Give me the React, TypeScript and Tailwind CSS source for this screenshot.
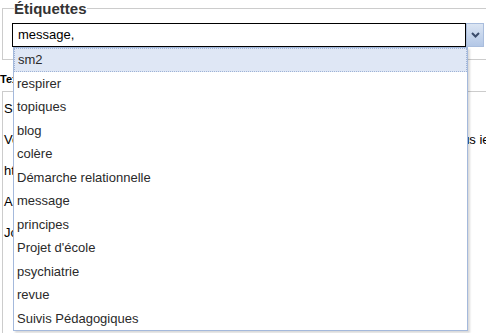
import React from "react";

const tags = [
  "sm2",
  "respirer",
  "topiques",
  "blog",
  "colère",
  "Démarche relationnelle",
  "message",
  "principes",
  "Projet d'école",
  "psychiatrie",
  "revue",
  "Suivis Pédagogiques",
];

const rows = ["Sujet", "Vous pourrez saisir plusieurs étiquettes, séparées par des virgules, pour que vous ie", "http://", "Auteur", "Journal"];

export default function App() {
  return (
    <div className="relative h-[333px] w-[486px] overflow-hidden bg-white font-['Liberation_Sans',Arial,sans-serif] text-[13px] text-[#222]">
      {/* Tags fieldset */}
      <fieldset className="ml-[2px] w-[560px] border border-[#cccccc] pb-[12px] pl-[9px]">
        <legend className="ml-[2px] text-[15px] font-bold leading-[17px] text-[#333]">Étiquettes</legend>
        <div className="mt-[6px] flex">
          <div className="flex h-[24px] w-[454px] items-center border border-black bg-white pl-[5px] text-black">
            message,
          </div>
          <button className="flex h-[24px] w-[18px] items-center justify-center border border-[#a9bddd] bg-gradient-to-b from-[#dbe5f3] to-[#b3c7e6]">
            <svg width="9" height="6" viewBox="0 0 9 6">
              <path d="M1 1 L4.5 4.5 L8 1" fill="none" stroke="#3b4c6b" strokeWidth="2" />
            </svg>
          </button>
        </div>
      </fieldset>

      {/* Content behind the dropdown */}
      <div className="mt-[12px] text-[11px] font-bold leading-[14px] text-black">Texte</div>
      <div className="mt-[5px] ml-[2px] h-[300px] border-t border-l border-[#cccccc] pl-[1px] pt-[9px] text-black">
        {rows.map((r) => (
          <div key={r} className="h-[31px] whitespace-nowrap leading-[16px]">
            {r}
          </div>
        ))}
      </div>

      {/* Dropdown list */}
      <ul className="absolute left-[13px] top-[47px] w-[455px] border border-[#a4b9dc] bg-white py-0 shadow-[2px_2px_2px_rgba(0,0,0,0.15)]">
        {tags.map((t, i) => (
          <li
            key={t}
            className={`flex h-[23.5px] items-center pl-[3px] text-[#2a2a2a] ${
              i === 0 ? "border border-dotted border-[#9fb3d6] bg-[#dfe7f5] pl-[2px]" : ""
            }`}
          >
            {t}
          </li>
        ))}
      </ul>
    </div>
  );
}
